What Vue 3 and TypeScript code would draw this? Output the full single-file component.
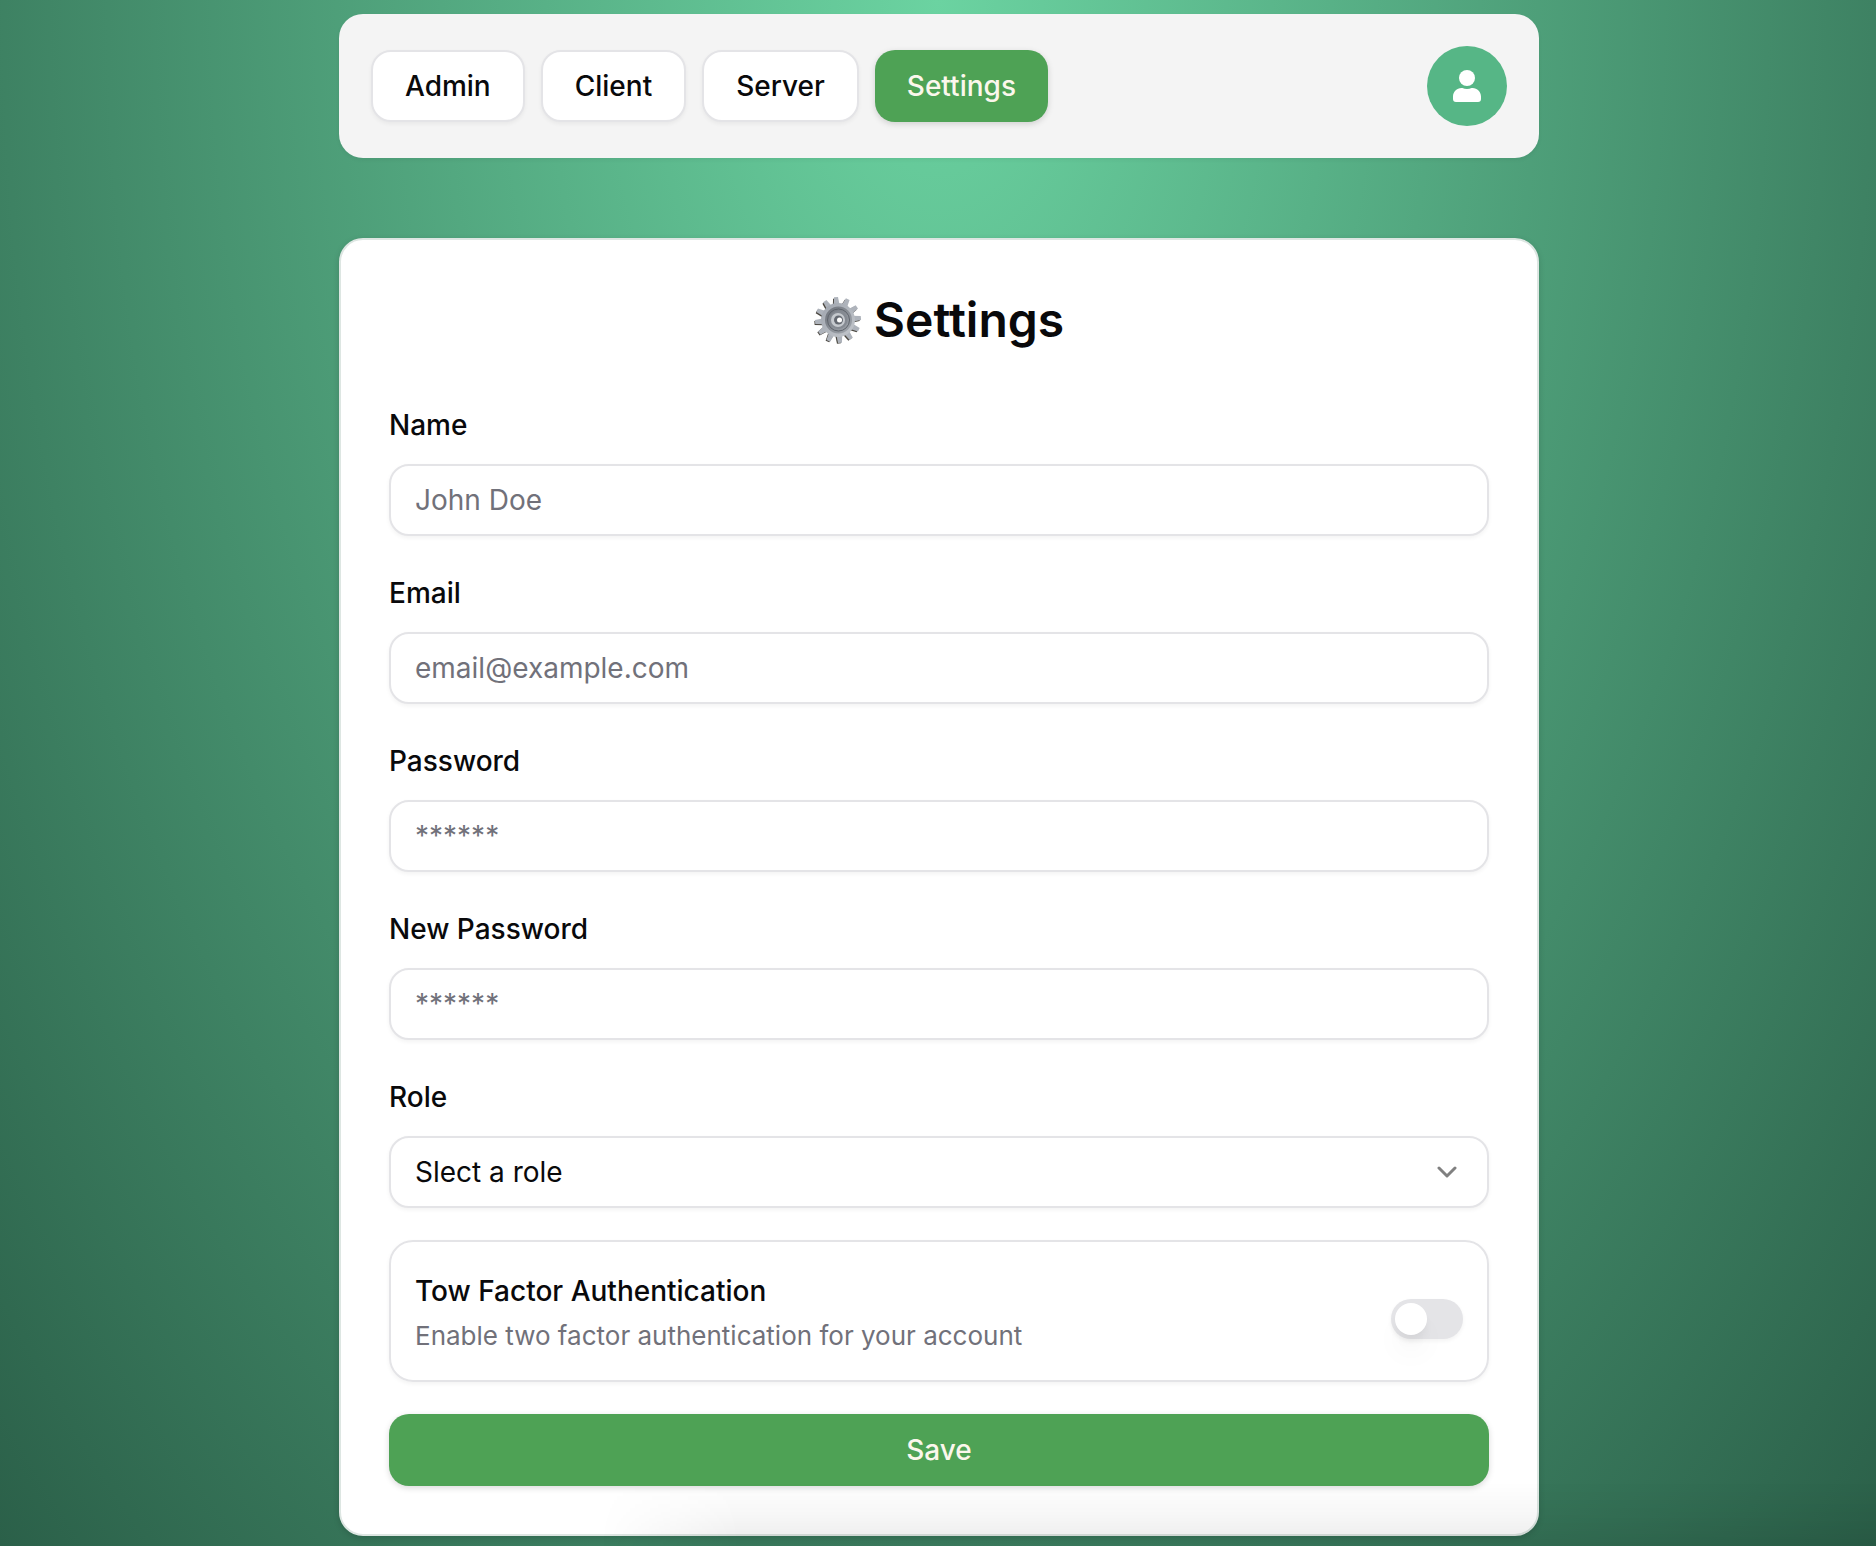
<script setup lang="ts">
import { reactive, ref } from 'vue'

interface Tab {
  label: string
  href: string
}

interface Field {
  id: 'name' | 'email' | 'password' | 'newPassword'
  label: string
  type: string
  placeholder: string
}

const tabs: Tab[] = [
  { label: 'Admin', href: '#admin' },
  { label: 'Client', href: '#client' },
  { label: 'Server', href: '#server' },
  { label: 'Settings', href: '#settings' },
]
const current = ref('Settings')

const fields: Field[] = [
  { id: 'name', label: 'Name', type: 'text', placeholder: 'John Doe' },
  { id: 'email', label: 'Email', type: 'email', placeholder: 'email@example.com' },
  { id: 'password', label: 'Password', type: 'password', placeholder: '******' },
  { id: 'newPassword', label: 'New Password', type: 'password', placeholder: '******' },
]

const form = reactive({
  name: '',
  email: '',
  password: '',
  newPassword: '',
  role: '',
  twoFactor: false,
})

const teeth = Array.from({ length: 12 }, (_, i) => i * 30 - 5)
</script>

<template>
  <div class="page">
    <nav class="navbar">
      <div class="tabs">
        <a
          v-for="tab in tabs"
          :key="tab.label"
          :href="tab.href"
          class="tab"
          :class="{ active: tab.label === current }"
          @click.prevent="current = tab.label"
        >{{ tab.label }}</a>
      </div>
      <button type="button" class="avatar" aria-label="Account menu">
        <svg viewBox="0 0 28 32" width="28" height="32" fill="#fff" aria-hidden="true">
          <circle cx="14" cy="8" r="8" />
          <path d="M8.400 18h1c1.400.6 2.900 1 4.600 1s3.200-.4 4.600-1h1c4.600 0 8.400 3.800 8.400 8.400V29a3 3 0 0 1-3 3H3a3 3 0 0 1-3-3v-2.600C0 21.800 3.800 18 8.400 18z" />
        </svg>
      </button>
    </nav>

    <main class="card">
      <h1 class="title">
        <svg class="gear" viewBox="0 0 48 48" width="48" height="48" aria-hidden="true">
          <defs>
            <linearGradient id="rim" x1="0" y1="0" x2="1" y2="1">
              <stop offset="0" stop-color="#9fa5ae" />
              <stop offset="1" stop-color="#c3c7cc" />
            </linearGradient>
            <linearGradient id="dish" x1="0" y1="0" x2="1" y2="1">
              <stop offset="0" stop-color="#6d727a" />
              <stop offset="1" stop-color="#a4a9b0" />
            </linearGradient>
          </defs>
          <g fill="#4b4740" transform="translate(-1 1)">
            <path v-for="a in teeth" :key="a" d="M21 10l1-8.600h4L27 10z" :transform="`rotate(${a} 24 24)`" />
          </g>
          <g fill="#aeb3bb">
            <path v-for="a in teeth" :key="a" d="M21 10l1-9h4l1 9z" :transform="`rotate(${a} 24 24)`" />
          </g>
          <circle cx="24" cy="24" r="17" fill="url(#rim)" />
          <circle cx="24.500" cy="24" r="13.500" fill="url(#dish)" />
          <circle cx="24.500" cy="24" r="11" fill="none" stroke="#5f646c" stroke-width="1" />
          <circle cx="24.500" cy="24" r="9" fill="#858a92" />
          <circle cx="24" cy="24" r="7" fill="#c5c9ce" />
          <circle cx="24.500" cy="24" r="4.500" fill="#646971" />
          <circle cx="25.500" cy="24" r="2.500" fill="#fff" />
        </svg>
        <span>Settings</span>
      </h1>

      <form class="form" @submit.prevent>
        <div v-for="field in fields" :key="field.id" class="field">
          <label :for="field.id">{{ field.label }}</label>
          <input
            :id="field.id"
            v-model="form[field.id]"
            class="control"
            :type="field.type"
            :placeholder="field.placeholder"
          />
        </div>

        <div class="field">
          <label for="role">Role</label>
          <div class="select">
            <select id="role" v-model="form.role" class="control">
              <option value="">Slect a role</option>
              <option value="ADMIN">Admin</option>
              <option value="USER">User</option>
            </select>
            <svg class="chevron" viewBox="0 0 20 12" width="20" height="12" fill="none" stroke="#808080" stroke-width="3" stroke-linecap="round" stroke-linejoin="round" aria-hidden="true">
              <path d="M2 2l8 8 8-8" />
            </svg>
          </div>
        </div>

        <div class="option">
          <div class="option-text">
            <label for="two-factor">Tow Factor Authentication</label>
            <p id="two-factor-hint">Enable two factor authentication for your account</p>
          </div>
          <input
            id="two-factor"
            v-model="form.twoFactor"
            class="switch"
            type="checkbox"
            role="switch"
            aria-describedby="two-factor-hint"
          />
        </div>

        <button type="submit" class="save">Save</button>
      </form>
    </main>
  </div>
</template>

<style>
body {
  margin: 0;
}
</style>

<style scoped>
.page {
  box-sizing: border-box;
  min-height: 100vh;
  padding: 14px 24px 8px 26px;
  display: flex;
  flex-direction: column;
  align-items: center;
  gap: 80px;
  position: relative;
  font-family: Inter, "Liberation Sans", sans-serif;
  font-size: 28px;
  color: #09090b;
  background: radial-gradient(ellipse at top, #6bd3a1, #2b6049);
}

.page::after {
  content: "";
  position: absolute;
  left: 600px;
  right: 0;
  bottom: 0;
  height: 64px;
  pointer-events: none;
  background: linear-gradient(to top, rgba(0, 0, 0, 0.08), rgba(0, 0, 0, 0.03) 50%, rgba(0, 0, 0, 0));
  mask-image: linear-gradient(to right, transparent, #000 140px);
}

.navbar,
.card {
  box-sizing: border-box;
  width: 100%;
  max-width: 1200px;
  border-radius: 24px;
}

.navbar {
  display: flex;
  align-items: center;
  justify-content: space-between;
  padding: 32px;
  background: #f4f4f4;
  box-shadow: 0 2px 4px rgba(0, 0, 0, 0.05);
}

.tabs {
  display: flex;
  gap: 16px;
}

.tab {
  box-sizing: border-box;
  height: 72px;
  padding: 0 32px;
  display: flex;
  align-items: center;
  border: 2px solid #e4e4e7;
  border-radius: 20px;
  background: #fff;
  color: inherit;
  font-weight: 500;
  text-decoration: none;
  box-shadow: 0 2px 4px rgba(0, 0, 0, 0.05);
}

.tab.active {
  border: 0;
  background: #4ea255;
  color: #fbf7ec;
  box-shadow: 0 2px 6px rgba(0, 0, 0, 0.15);
}

.avatar {
  width: 80px;
  height: 80px;
  padding: 0;
  display: flex;
  align-items: center;
  justify-content: center;
  border: 0;
  border-radius: 50%;
  background: #56b686;
}

.card {
  padding: 48px;
  border: 2px solid #dde6e2;
  background: #fff;
  box-shadow: 0 2px 6px rgba(0, 0, 0, 0.15);
}

.title {
  margin: 0 0 48px;
  display: flex;
  align-items: center;
  justify-content: center;
  gap: 12px;
  font-size: 48px;
  line-height: 64px;
  font-weight: 600;
}

.form {
  display: flex;
  flex-direction: column;
  gap: 32px;
}

.field {
  display: flex;
  flex-direction: column;
  gap: 14px;
}

label {
  line-height: 50px;
  font-weight: 500;
}

.control {
  box-sizing: border-box;
  width: 100%;
  height: 72px;
  padding: 0 24px;
  border: 2px solid #e4e4e7;
  border-radius: 20px;
  background: #fff;
  color: inherit;
  font-family: inherit;
  font-size: 28px;
  box-shadow: 0 2px 4px rgba(0, 0, 0, 0.05);
  appearance: none;
}

.control::placeholder {
  color: #71717a;
  opacity: 1;
}

.select {
  position: relative;
}

.select .control {
  display: block;
}

.chevron {
  position: absolute;
  right: 32px;
  top: 30px;
  pointer-events: none;
}

.option {
  display: flex;
  align-items: center;
  justify-content: space-between;
  padding: 24px;
  border: 2px solid #e4e4e7;
  border-radius: 24px;
  box-shadow: 0 2px 4px rgba(0, 0, 0, 0.05);
}

.option-text {
  display: flex;
  flex-direction: column;
}

.option-text p {
  margin: 0;
  font-size: 26px;
  line-height: 40px;
  color: #71717a;
}

.switch {
  appearance: none;
  box-sizing: border-box;
  width: 72px;
  height: 40px;
  margin: 16px 0 0;
  padding: 4px;
  display: flex;
  flex-shrink: 0;
  border-radius: 20px;
  background: #e4e4e7;
  box-shadow: 0 2px 4px rgba(0, 0, 0, 0.05);
}

.switch::before {
  content: "";
  width: 32px;
  height: 32px;
  border-radius: 50%;
  background: #fff;
  box-shadow: 0 20px 30px -6px rgba(0, 0, 0, 0.08), 0 8px 12px -4px rgba(0, 0, 0, 0.08);
}

.switch:checked {
  justify-content: flex-end;
  background: #4ea255;
}

.save {
  height: 72px;
  padding: 0 32px;
  border: 0;
  border-radius: 20px;
  background: #4ea255;
  color: #fbf7ec;
  font-family: inherit;
  font-size: 28px;
  font-weight: 500;
  box-shadow: 0 2px 6px rgba(0, 0, 0, 0.15);
}
</style>
